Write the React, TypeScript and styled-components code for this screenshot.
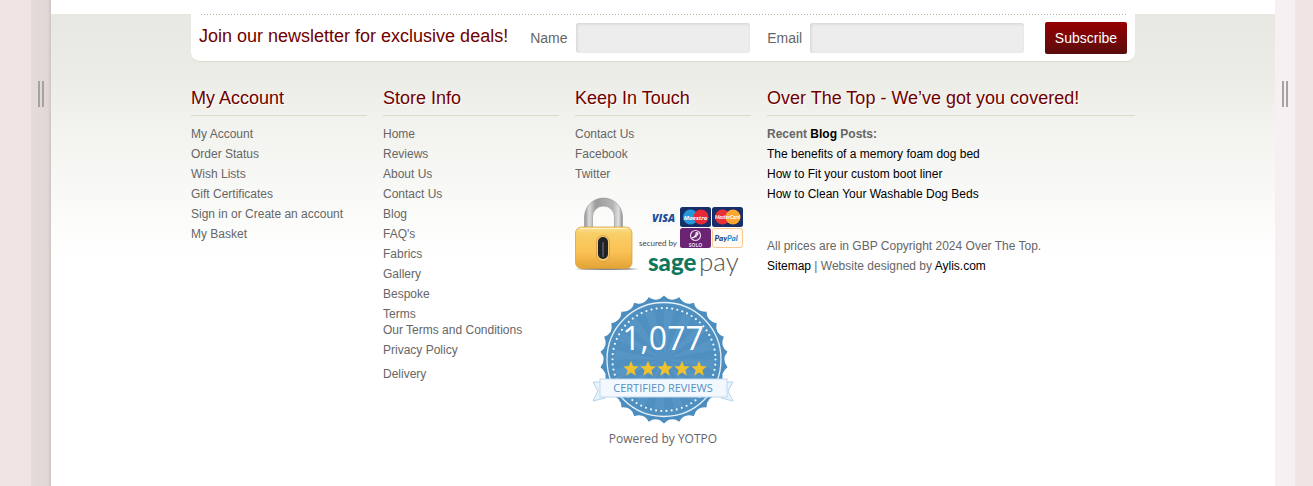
import React from "react";
import styled, { createGlobalStyle } from "styled-components";

const GlobalStyle = createGlobalStyle`
  *, *::before, *::after { box-sizing: border-box; }
  body {
    margin: 0;
    background: #f0e5e3;
    color: #666;
    font: 12px/16px Arial, "Liberation Sans", sans-serif;
  }
`;

const Frame = styled.div`
  display: flex;
  min-height: 100vh;
  padding: 0 18px 0 31px;
`;

const Rail = styled.div<{ $side: "left" | "right" }>`
  flex: 0 0 20px;
  display: flex;
  justify-content: center;
  align-items: flex-start;
  padding-top: 81px;
  background: ${(p) =>
    p.$side === "left"
      ? "linear-gradient(90deg, #e5dbd9, #e1d7d5 85%, #cdc4c3)"
      : "#f7f0f3"};
`;

const Grip = styled.span`
  width: 6px;
  height: 26px;
  border: solid #a3a3a3;
  border-width: 0 2px;
`;

const Page = styled.main`
  flex: 1;
  min-width: 0;
  padding-top: 14px;
  background: #fff;
`;

const Footer = styled.footer`
  background: linear-gradient(#e8e8e3, #ecece7 60px, #f2f2ee 110px, #fff 245px);
`;

const Container = styled.div`
  max-width: 944px;
  margin: 0 auto;
`;

const Newsletter = styled.form`
  padding: 0 8px;
  background: #fff;
  border-bottom: 1px solid #dadacb;
  border-radius: 0 0 9px 9px;
`;

const DottedRule = styled.div`
  height: 1px;
  margin-left: 2px;
  background: repeating-linear-gradient(90deg, #b5b399 0 1px, #fff 1px 3px);
`;

const NewsletterRow = styled.div`
  display: flex;
  align-items: center;
  padding: 7px 0;
`;

const NewsletterTitle = styled.h2`
  margin: 0 22px 4px 0;
  color: #6f0000;
  font-size: 18px;
  font-weight: 400;
  line-height: 20px;
  white-space: nowrap;
`;

const FieldLabel = styled.label`
  margin-right: 8px;
  font-size: 14px;
`;

const Field = styled.input<{ $grow: number; $gap: number }>`
  flex: ${(p) => p.$grow} 1 0;
  min-width: 0;
  height: 30px;
  margin-right: ${(p) => p.$gap}px;
  padding: 0;
  border: 0;
  border-radius: 3px;
  background: #ededed;
  box-shadow: inset 1px 1px 3px #d2d2d2;
  font: inherit;
`;

const SubscribeButton = styled.button`
  width: 82px;
  height: 32px;
  padding: 0;
  border: 0;
  border-radius: 2px;
  background: linear-gradient(#960000, #5a0d0d);
  color: #fff;
  font: 14px/16px Arial, "Liberation Sans", sans-serif;
`;

const Columns = styled.div`
  display: grid;
  grid-template-columns: repeat(5, 1fr);
  column-gap: 16px;
  padding: 26px 0 32px;
`;

const Column = styled.section<{ $span?: number }>`
  grid-column: span ${(p) => p.$span ?? 1};
  min-width: 0;
`;

const Heading = styled.h3`
  margin: 0 0 8px;
  padding-bottom: 7px;
  border-bottom: 1px solid #dadacb;
  color: #6f0000;
  font-size: 18px;
  font-weight: 400;
  line-height: 20px;
  text-shadow: 1px 1px 0 #fff;
  white-space: nowrap;
`;

const LinkList = styled.ul`
  margin: 0;
  padding: 0;
  list-style: none;
`;

const LinkItem = styled.li`
  padding: 2px 0;
`;

const SubItem = styled.li`
  padding-bottom: 4px;
`;

const MutedLink = styled.a`
  color: #666;
  text-decoration: none;
`;

const DarkLink = styled.a`
  color: #000;
  text-decoration: none;
`;

const Lines = styled.div`
  margin-bottom: 32px;
  line-height: 20px;
`;

const Payment = styled.svg`
  display: block;
  margin-top: 12px;
`;

const Seal = styled.svg`
  display: block;
  margin: 12px auto 6px;
`;

const PoweredBy = styled.div`
  font: 12px/16px "Open Sans", sans-serif;
  text-align: center;
`;

type Entry = { label: string; children?: string[] };

const account: Entry[] = [
  { label: "My Account" },
  { label: "Order Status" },
  { label: "Wish Lists" },
  { label: "Gift Certificates" },
];

const store: Entry[] = [
  { label: "Home" },
  { label: "Reviews" },
  { label: "About Us" },
  { label: "Contact Us" },
  { label: "Blog" },
  { label: "FAQ's" },
  { label: "Fabrics" },
  { label: "Gallery" },
  { label: "Bespoke" },
  { label: "Terms", children: ["Our Terms and Conditions", "Privacy Policy"] },
  { label: "Delivery" },
];

const touch: Entry[] = [
  { label: "Contact Us" },
  { label: "Facebook" },
  { label: "Twitter" },
];

function Entries({ items }: { items: Entry[] }) {
  return (
    <>
      {items.map((item) => (
        <LinkItem key={item.label}>
          <MutedLink href="#">{item.label}</MutedLink>
          {item.children && (
            <LinkList>
              {item.children.map((child) => (
                <SubItem key={child}>
                  <MutedLink href="#">{child}</MutedLink>
                </SubItem>
              ))}
            </LinkList>
          )}
        </LinkItem>
      ))}
    </>
  );
}

function PaymentBadge() {
  return (
    <Payment width="176" height="86" viewBox="0 0 176 86" role="img" aria-label="Secured by Sage Pay">
      <defs>
        <linearGradient id="gold" x1="0" y1="0" x2="0" y2="1">
          <stop offset="0" stopColor="#fde39a" />
          <stop offset=".15" stopColor="#f8cf68" />
          <stop offset=".6" stopColor="#fbc154" />
          <stop offset="1" stopColor="#e3a236" />
        </linearGradient>
        <linearGradient id="steel" x1="0" y1="0" x2="1" y2="0">
          <stop offset="0" stopColor="#8e8e8e" />
          <stop offset=".12" stopColor="#dcdcdc" />
          <stop offset=".3" stopColor="#9b9b9b" />
          <stop offset=".75" stopColor="#b5b5b5" />
          <stop offset=".9" stopColor="#e0e0e0" />
          <stop offset="1" stopColor="#8b8b8b" />
        </linearGradient>
        <radialGradient id="shade">
          <stop offset="0" stopColor="#666" />
          <stop offset=".7" stopColor="#777" stopOpacity=".6" />
          <stop offset="1" stopColor="#777" stopOpacity="0" />
        </radialGradient>
      </defs>
      <ellipse cx="32" cy="73" rx="35" ry="1.500" fill="url(#shade)" />
      <path
        d="M9.500 35V21a19 19 0 0 1 38 0v14h-8V21a11 11 0 0 0-22 0v14z"
        fill="url(#steel)"
        stroke="#929292"
        strokeWidth=".6"
      />
      <rect x="0.500" y="31" width="56.500" height="41.500" rx="6" fill="url(#gold)" stroke="#d39b35" strokeWidth=".7" />
      <path d="M5 32.500h47" stroke="#fff0bd" />
      <rect x="21.500" y="39.500" width="13" height="26" rx="6.500" fill="#f6cb70" stroke="#c58f35" strokeWidth=".6" />
      <path d="M28 41a5 5 0 0 1 5 5v12a5 5 0 0 1-10 0v-12a5 5 0 0 1 5-5z" fill="#202225" />
      <path d="M28 46v15" stroke="#495057" strokeWidth="2" />

      <rect x="74.500" y="11" width="28" height="19.500" rx="2" fill="#f9f9f9" />
      <text x="88.500" y="25.500" textAnchor="middle" fontFamily="Open Sans" fontSize="10.500" fontWeight="800" fontStyle="italic" fill="#1b4d98">VISA</text>

      <rect x="105" y="11" width="31" height="20" rx="2.500" fill="#182f69" />
      <circle cx="115.500" cy="21" r="7.500" fill="#2498d8" />
      <circle cx="126" cy="21" r="7.500" fill="#e72839" />
      <text x="120.500" y="23.500" textAnchor="middle" fontFamily="Open Sans" fontSize="6" fontWeight="700" fontStyle="italic" fill="#fff">Maestro</text>

      <rect x="137" y="11" width="31" height="20" rx="2.500" fill="#182f69" />
      <circle cx="147.500" cy="21" r="7.500" fill="#e83136" />
      <circle cx="158" cy="21" r="7.500" fill="#f9a72e" />
      <text x="152.500" y="23" textAnchor="middle" fontFamily="Lato" fontSize="5" fontWeight="700" fontStyle="italic" fill="#fff">MasterCard</text>

      <rect x="105" y="32" width="31" height="20" rx="2.500" fill="#6b2473" />
      <circle cx="120.500" cy="39.500" r="5" fill="none" stroke="#e7d5eb" strokeWidth="1.200" />
      <path d="M121 36.500c3 0 2 3 0 3s-1 3-4 2M121 36.500v5" fill="none" stroke="#fff" strokeWidth="1.200" />
      <text x="120.500" y="50.500" textAnchor="middle" fontFamily="Open Sans" fontSize="5" fontWeight="700" fill="#e9d9ec">SOLO</text>

      <rect x="137.500" y="32.500" width="30" height="19" rx="2" fill="#fffaf3" stroke="#f7c98f" />
      <text x="139.500" y="45" fontFamily="Lato" fontSize="8" fontWeight="900" fontStyle="italic" fill="#1f3e7c">
        Pay<tspan fill="#2592d0">Pal</tspan>
      </text>

      <text x="64" y="50" fontFamily="Lato" fontSize="8" fill="#444">secured by</text>
      <text x="73" y="75" fontFamily="Lato" fontSize="24" fontWeight="900" fill="#10775c">sage</text>
      <text x="124" y="75" fontFamily="Lato" fontSize="26" fontWeight="300" fill="#555">pay</text>
    </Payment>
  );
}

const CX = 72;
const CY = 65.5;

function polar(radius: number, turn: number) {
  const a = turn * Math.PI * 2 - Math.PI / 2;
  return `${(CX + radius * Math.cos(a)).toFixed(2)} ${(CY + radius * Math.sin(a)).toFixed(2)}`;
}

const TEETH = 26;
const edge =
  `M${polar(64, 0)}` +
  Array.from({ length: TEETH }, (_, i) => `Q${polar(57, (i + 0.5) / TEETH)} ${polar(64, (i + 1) / TEETH)}`).join("") +
  "Z";

const rays = Array.from(
  { length: 16 },
  (_, i) => `M${CX} ${CY}L${polar(50, i / 16)}L${polar(50, (i + 0.5) / 16)}Z`
).join("");

function starPoints(cx: number, cy: number) {
  return Array.from({ length: 10 }, (_, i) => {
    const r = i % 2 ? 3.6 : 8.2;
    const a = (i * Math.PI) / 5 - Math.PI / 2;
    return `${(cx + r * Math.cos(a)).toFixed(2)},${(cy + r * Math.sin(a)).toFixed(2)}`;
  }).join(" ");
}

function ReviewSeal() {
  return (
    <Seal width="142" height="131" viewBox="0 0 142 131" role="img" aria-label="1,077 certified reviews">
      <path d={edge} fill="#4b8dbf" />
      <circle cx={CX} cy={CY} r="57" fill="#4f90c1" stroke="#e4f0f9" strokeWidth="1.300" />
      <path d={rays} fill="#6ba3cd" opacity=".3" />
      <circle cx={CX} cy={CY} r="51.500" fill="none" stroke="#eef6fc" strokeWidth="2.200" strokeLinecap="round" strokeDasharray="0 5.219" />
      <text x={CX - 1} y="56" textAnchor="middle" fontFamily="Open Sans" fontSize="32" fill="#fff">1,077</text>
      {[39, 56, 73, 90, 107].map((x) => (
        <polygon key={x} points={starPoints(x, 75)} fill="#efc22b" />
      ))}
      <path d="M1 88h12v16l-12 3 5-10zM141 88h-12v16l12 3-5-10z" fill="#e9f3fb" stroke="#b5d3ea" />
      <rect x="8" y="85" width="127" height="18" fill="#f2f8fe" stroke="#c0d9ed" />
      <text x={CX - 1} y="98" textAnchor="middle" fontFamily="Open Sans" fontSize="11" fill="#5590c0">CERTIFIED REVIEWS</text>
    </Seal>
  );
}

export default function App() {
  return (
    <>
      <GlobalStyle />
      <Frame>
        <Rail $side="left"><Grip /></Rail>
        <Page>
          <Footer>
            <Container>
              <Newsletter>
                <DottedRule />
                <NewsletterRow>
                  <NewsletterTitle>Join our newsletter for exclusive deals!</NewsletterTitle>
                  <FieldLabel htmlFor="name">Name</FieldLabel>
                  <Field id="name" type="text" $grow={174} $gap={17} />
                  <FieldLabel htmlFor="email">Email</FieldLabel>
                  <Field id="email" type="email" $grow={213} $gap={21} />
                  <SubscribeButton type="submit">Subscribe</SubscribeButton>
                </NewsletterRow>
              </Newsletter>
              <Columns>
                <Column>
                  <Heading>My Account</Heading>
                  <LinkList>
                    <Entries items={account} />
                    <LinkItem>
                      <MutedLink href="#">Sign in</MutedLink> or <MutedLink href="#">Create an account</MutedLink>
                    </LinkItem>
                    <Entries items={[{ label: "My Basket" }]} />
                  </LinkList>
                </Column>
                <Column>
                  <Heading>Store Info</Heading>
                  <LinkList><Entries items={store} /></LinkList>
                </Column>
                <Column>
                  <Heading>Keep In Touch</Heading>
                  <LinkList><Entries items={touch} /></LinkList>
                  <PaymentBadge />
                  <ReviewSeal />
                  <PoweredBy>Powered by YOTPO</PoweredBy>
                </Column>
                <Column $span={2}>
                  <Heading>Over The Top - We’ve got you covered!</Heading>
                  <Lines>
                    <strong>Recent <DarkLink href="#">Blog</DarkLink> Posts:</strong><br />
                    <DarkLink href="#">The benefits of a memory foam dog bed</DarkLink><br />
                    <DarkLink href="#">How to Fit your custom boot liner</DarkLink><br />
                    <DarkLink href="#">How to Clean Your Washable Dog Beds</DarkLink>
                  </Lines>
                  <Lines>
                    All prices are in GBP Copyright 2024 Over The Top.<br />
                    <DarkLink href="#">Sitemap</DarkLink> | Website designed by <DarkLink href="#">Aylis.com</DarkLink>
                  </Lines>
                </Column>
              </Columns>
            </Container>
          </Footer>
        </Page>
        <Rail $side="right"><Grip /></Rail>
      </Frame>
    </>
  );
}
